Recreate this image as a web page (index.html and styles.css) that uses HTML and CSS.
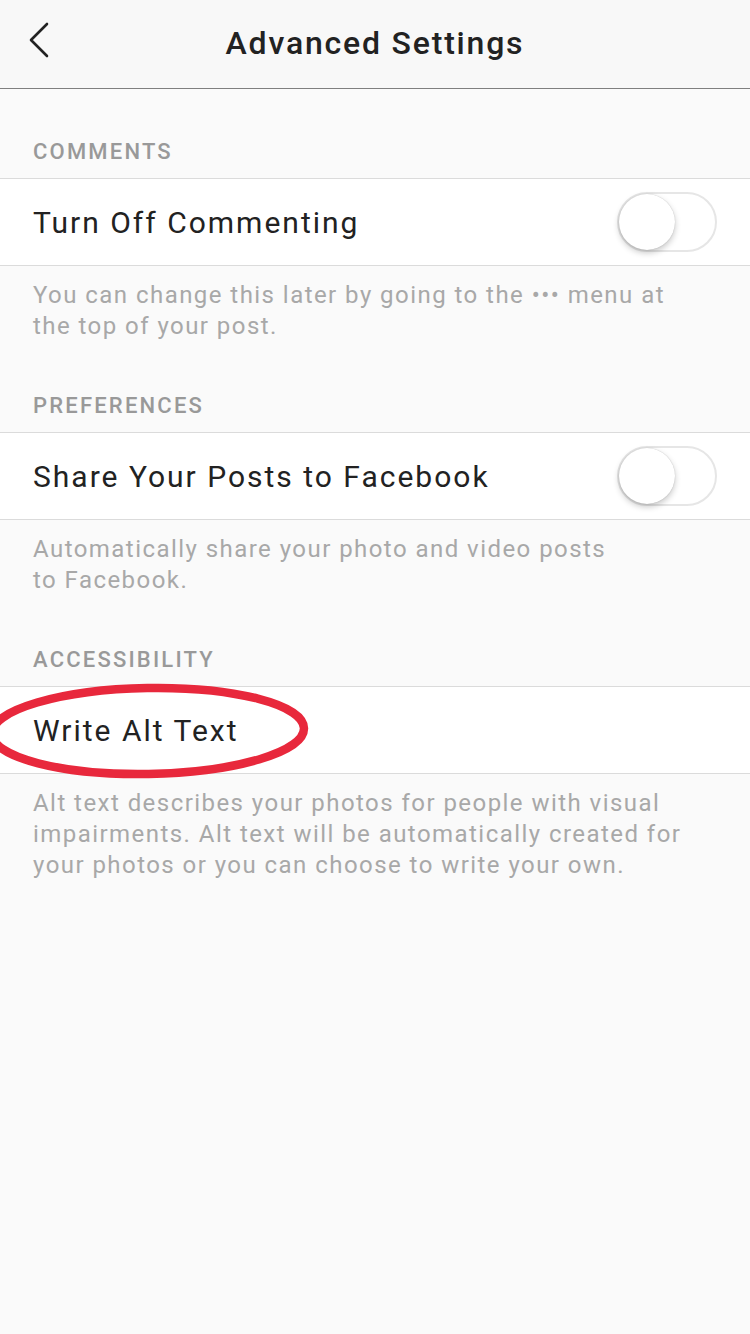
FILE: index.html
```html
<!DOCTYPE html>
<html lang="en">
<head>
<meta charset="UTF-8">
<meta name="viewport" content="width=device-width, initial-scale=1.0">
<title>Advanced Settings</title>
<link rel="stylesheet" href="styles.css">
</head>
<body>

<div class="topbar">
  <span class="back">
    <svg width="22" height="36" viewBox="0 0 22 36">
      <polyline points="19,2 3,18 19,34" fill="none" stroke="#222" stroke-width="2.6" stroke-linecap="round" stroke-linejoin="round"/>
    </svg>
  </span>
  <h1>Advanced Settings</h1>
</div>

<div class="section-title">COMMENTS</div>
<div class="row">
  <span>Turn Off Commenting</span>
  <span class="toggle"><span class="knob"></span></span>
</div>
<p class="note">You can change this later by going to the &bull;&bull;&bull; menu at the top of your post.</p>

<div class="section-title">PREFERENCES</div>
<div class="row">
  <span>Share Your Posts to Facebook</span>
  <span class="toggle"><span class="knob"></span></span>
</div>
<p class="note">Automatically share your photo and video posts<br>to Facebook.</p>

<div class="section-title">ACCESSIBILITY</div>
<div class="row alt-row">
  <span>Write Alt Text</span>
  <svg class="circle" width="330" height="110" viewBox="0 0 330 110">
    <ellipse cx="158" cy="55" rx="156" ry="43" fill="none" stroke="#e8283c" stroke-width="8.5" transform="rotate(-1 158 55)"/>
  </svg>
</div>
<p class="note">Alt text describes your photos for people with visual impairments. Alt text will be automatically created for your photos or you can choose to write your own.</p>

</body>
</html>
```

FILE: styles.css
```css
body {
  margin: 0;
  background-color: #fafafa;
  font-family: Roboto, "Liberation Sans", sans-serif;
  color: #262626;
  width: 750px;
  overflow: hidden;
}

.topbar {
  height: 88px;
  border-bottom: 1px solid #7f7f7f;
  background-color: #f8f8f8;
  display: flex;
  align-items: center;
  justify-content: center;
  position: relative;
}

.topbar h1 {
  margin: 0;
  font-size: 32px;
  font-weight: 500;
  letter-spacing: 1.8px;
  color: #222;
  padding-bottom: 2px;
}

.back {
  position: absolute;
  left: 28px;
  top: 22px;
}

.section-title {
  padding: 50px 33px 13px;
  font-size: 22px;
  line-height: 26px;
  font-weight: 500;
  color: #999;
  letter-spacing: 2.2px;
}

.row {
  height: 86px;
  background-color: #fff;
  border-top: 1px solid #dbdbdb;
  border-bottom: 1px solid #dbdbdb;
  display: flex;
  align-items: center;
  justify-content: space-between;
  padding: 0 33px;
  font-size: 30px;
  letter-spacing: 2px;
  color: #222;
}

.toggle {
  width: 96px;
  height: 56px;
  border: 2px solid #e6e6e6;
  border-radius: 30px;
  background-color: #fff;
  display: flex;
  align-items: center;
}

.knob {
  width: 56px;
  height: 56px;
  border-radius: 50%;
  background-color: #fff;
  box-shadow: 0 3px 6px rgba(0, 0, 0, 0.22), 0 0 1px rgba(0, 0, 0, 0.25);
}

.alt-row {
  position: relative;
}

.circle {
  position: absolute;
  left: -10px;
  top: -11px;
}

.note {
  margin: 0;
  padding: 14px 62px 1px 33px;
  font-size: 24px;
  line-height: 31px;
  letter-spacing: 1.45px;
  color: #a8a8a8;
}
```
